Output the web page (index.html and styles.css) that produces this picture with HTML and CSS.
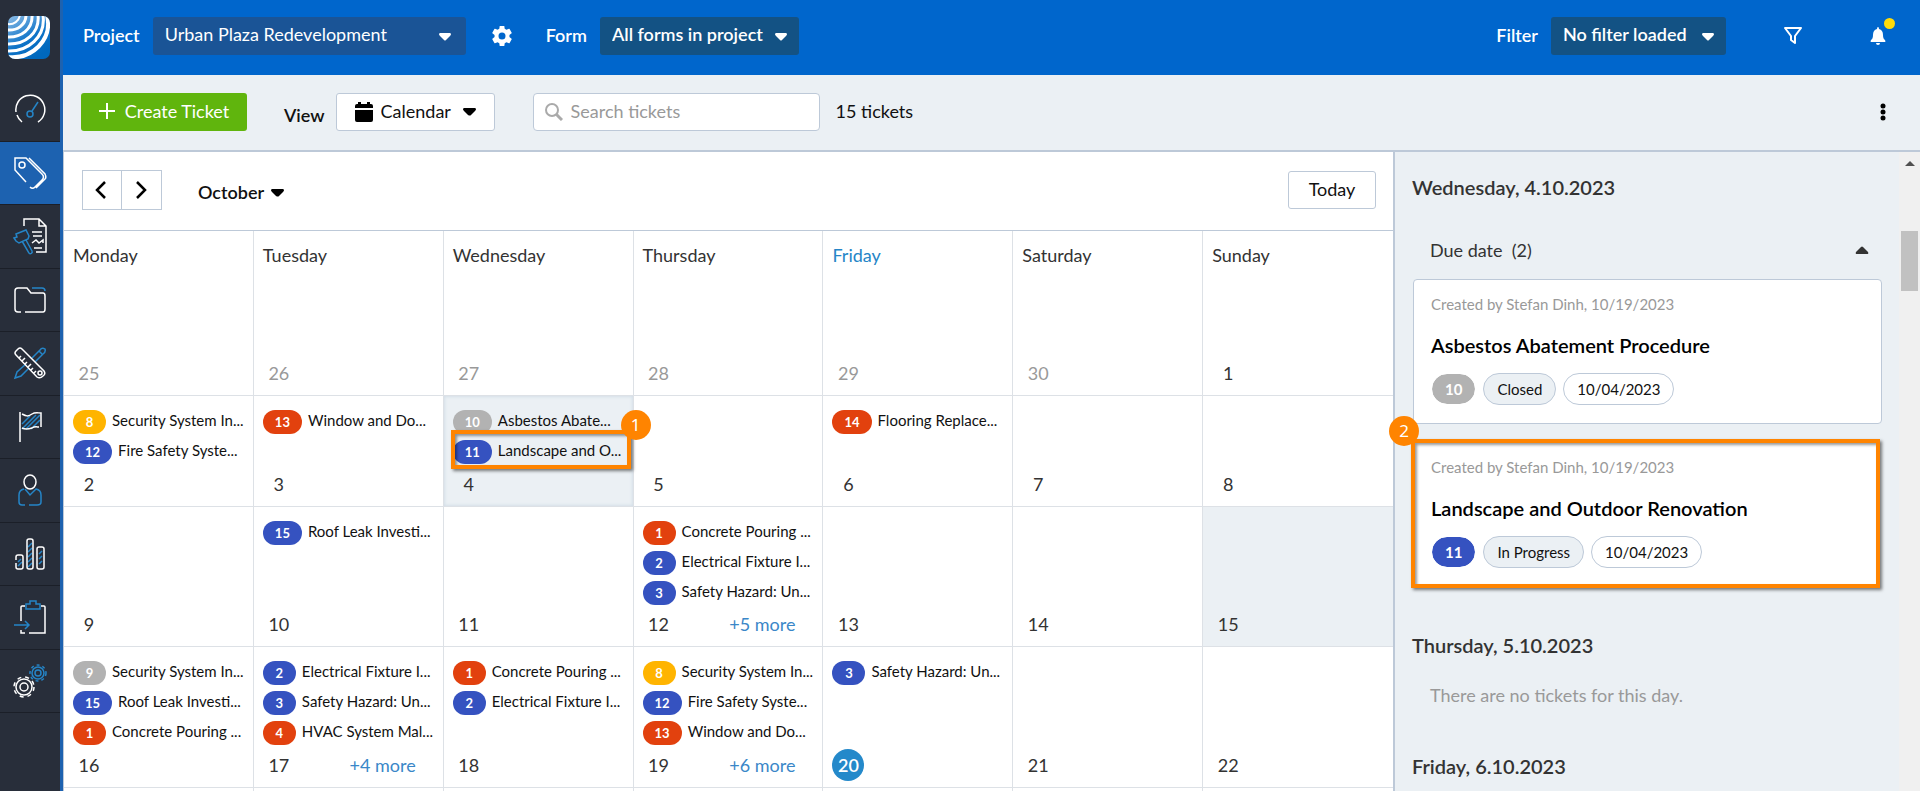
FILE: index.html
```
<!DOCTYPE html>
<html lang="en">
<head>
  <meta charset="utf-8">
  <title>Tickets - Calendar</title>
  <meta name="viewport" content="width=device-width, initial-scale=1">
  <link rel="stylesheet" href="styles.css">
</head>
<body>
  <nav class="sidebar">
    <a class="logo" href="#" aria-label="Home">
      <svg width="42" height="43" viewBox="0 0 42 43">
        <defs>
          <linearGradient id="logo-bg" x1="0" y1="0" x2="0.6" y2="1">
            <stop offset="0" stop-color="#8dbce6"/>
            <stop offset="0.6" stop-color="#0f74c8"/>
            <stop offset="1" stop-color="#0068bd"/>
          </linearGradient>
          <clipPath id="logo-clip"><rect width="42" height="43" rx="7"/></clipPath>
        </defs>
        <g clip-path="url(#logo-clip)">
          <rect width="42" height="43" fill="url(#logo-bg)"/>
          <g fill="none" stroke="#fff">
            <path stroke-width="2" d="M-1 8C6 9 11 5 12-1"/>
            <path stroke-width="3" d="M-1 14C9 15 18 9 18-1"/>
            <path stroke-width="3" d="M-1 21C13 22 25 13 24-1"/>
            <path stroke-width="3" d="M-1 28C17 29 32 17 30-1"/>
            <path stroke-width="3" d="M-1 35C20 36 38 21 35-1"/>
            <path stroke-width="4" d="M-1 41C24 44 45 24 39-1"/>
          </g>
        </g>
      </svg>
    </a>
    <div class="nav-items">
      <a href="#" aria-label="Dashboard">
        <svg width="32" height="32" viewBox="0 0 32 32">
          <path d="M8 29A14.500 14.500 0 0 1 3 22M2 19A14.500 14.500 0 1 1 24 29"/>
          <g class="accent"><circle cx="16" cy="21" r="3"/><path d="M18 18L24 9"/></g>
        </svg>
      </a>
      <a class="active" href="#" aria-label="Tickets">
        <svg width="34" height="34" viewBox="0 0 34 34">
          <path d="M13 26L2 14V2H13L29 18C31 20 31 22 29 24L22 31C20 33 18 32 17 31M16 2L32 18C33 20 33 22 32 23L23 32"/>
          <circle cx="9" cy="9" r="3"/>
        </svg>
      </a>
      <a href="#" aria-label="Reports">
        <svg width="36" height="38" viewBox="0 0 36 38">
          <path d="M12 9V2H27L34 9V35H24M27 2V9H34M20 15H30M21 19H30M22 31H30M20 26L24 23L27 26L31 23V26"/>
          <path class="accent" d="M2 21L4 24L7 26L16 22L17 19L14 13L4 17L5 20ZM10 24L17 36C18 38 21 36 20 34L14 23"/>
        </svg>
      </a>
      <a href="#" aria-label="Documents">
        <svg width="34" height="28" viewBox="0 0 34 28">
          <path d="M8 26H5Q2 26 2 23V5Q2 2 5 2H14L18 7H30Q32 7 32 10V23Q32 26 30 26H12"/>
          <path class="accent" d="M19 2H29Q32 2 32 5"/>
        </svg>
      </a>
      <a href="#" aria-label="Plans">
        <svg width="34" height="34" viewBox="0 0 34 34">
          <path class="accent" d="M19 12L27 4Q29 1 32 3Q33 6 30 8L22 16M13 18L4 26L2 32L8 30L16 22M26 5L29 8"/>
          <path d="M3 9Q1 7 3 5L5 3Q7 1 9 3L31 25Q33 28 30 30Q27 33 24 31ZM6 12L8 10M9 15L12 12M12 18L14 16M15 21L18 18M18 24L20 22M21 27L23 25"/>
          <circle cx="27" cy="27" r="2"/>
        </svg>
      </a>
      <a href="#" aria-label="Milestones">
        <svg width="28" height="32" viewBox="0 0 28 32">
          <path class="accent" d="M6 13L14 5M6 18L20 4M10 18L24 4M15 18L24 9"/>
          <path d="M4 1V31M6 3C10 5 12 6 16 3C19 1 22 2 25 2V16M6 17C10 19 13 18 16 17C19 15 21 16 23 16"/>
        </svg>
      </a>
      <a href="#" aria-label="Contacts">
        <svg width="26" height="34" viewBox="0 0 26 34">
          <ellipse cx="13" cy="9" rx="6" ry="7"/>
          <path class="accent" d="M7 16Q2 17 2 22V29Q2 32 5 32H8M12 32H20Q24 32 24 29V22Q24 17 19 16L13 22L8 16"/>
        </svg>
      </a>
      <a href="#" aria-label="Statistics">
        <svg width="32" height="34" viewBox="0 0 32 34">
          <path class="accent" d="M4 25L7 22M4 29L8 25M14 10L18 6M14 15L18 11M14 20L18 16M14 25L18 21M14 30L18 26M25 17L28 14M25 22L28 19M25 27L28 24"/>
          <path d="M2 23V20Q2 18 4 18H7Q9 18 9 20V30Q9 32 7 32H4Q2 32 2 30V26M13 4Q13 2 15 2H17Q19 2 19 4V30Q19 32 17 32H15Q13 32 13 30ZM23 12Q23 10 25 10H28Q30 10 30 12V30Q30 32 28 32H25Q23 32 23 30Z"/>
        </svg>
      </a>
      <a href="#" aria-label="Export">
        <svg width="34" height="36" viewBox="0 0 34 36">
          <path d="M12 7H9Q8 7 8 8V22M8 31V34H12M16 34H32V8Q32 7 31 7H28"/>
          <path class="accent" d="M13 10V5H17V2H23V5H27V10ZM1 26H16M12 22L16 26L12 30"/>
        </svg>
      </a>
      <a href="#" aria-label="Settings">
        <svg width="36" height="36" viewBox="0 0 36 36">
          <g>
            <circle cx="12" cy="24" r="4"/>
            <circle cx="12" cy="24" r="8"/>
            <circle cx="12" cy="24" r="10" stroke-dasharray="4 4"/>
          </g>
          <g class="accent">
            <circle cx="26" cy="10" r="3"/>
            <circle cx="26" cy="10" r="6"/>
            <circle cx="26" cy="10" r="8" stroke-dasharray="3 3"/>
          </g>
        </svg>
      </a>
    </div>
  </nav>

  <div class="page">
    <header class="topbar">
      <label for="project">Project</label>
      <select id="project" class="dark-select project-select"><option>Urban Plaza Redevelopment</option></select>
      <button class="icon-button gear" aria-label="Project settings">
        <svg width="20" height="20" viewBox="2 2 20 20" fill="#fff"><path d="M19.400 13a7.500 7.500 0 0 0 0-2l2.200-1.700a.5.5 0 0 0 .1-.6l-2.100-3.700a.5.5 0 0 0-.6-.2l-2.600 1a7.500 7.500 0 0 0-1.700-1l-.4-2.700a.5.5 0 0 0-.5-.4h-3.600a.5.5 0 0 0-.5.4l-.4 2.700a7.500 7.500 0 0 0-1.700 1l-2.600-1a.5.5 0 0 0-.6.2L2.300 8.700a.5.5 0 0 0 .1.600L4.600 11a7.500 7.500 0 0 0 0 2l-2.200 1.700a.5.5 0 0 0-.1.600l2.100 3.700c.1.200.4.300.6.200l2.600-1c.5.400 1.100.7 1.700 1l.4 2.700c0 .2.200.4.500.4h3.600c.3 0 .5-.2.500-.4l.4-2.700c.6-.3 1.200-.6 1.700-1l2.600 1c.2.100.5 0 .6-.2l2.100-3.700a.5.5 0 0 0-.1-.6zM12 15.500a3.500 3.500 0 1 1 0-7 3.500 3.500 0 0 1 0 7z"/></svg>
      </button>
      <label for="form">Form</label>
      <select id="form" class="dark-select form-select"><option>All forms in project</option></select>
      <div class="topbar-right">
        <label for="filter">Filter</label>
        <select id="filter" class="dark-select filter-select"><option>No filter loaded</option></select>
        <button class="icon-button funnel" aria-label="Filter">
          <svg width="20" height="18" viewBox="0 0 20 18" fill="none" stroke="#fff" stroke-width="2" stroke-linejoin="round"><path d="M2 1H18L12 9V16L8 13V9Z"/></svg>
        </button>
        <button class="icon-button bell" aria-label="Notifications">
          <svg width="16" height="18" viewBox="0 0 16 18" fill="#fff"><path d="M8 0Q9 0 9 2Q13 3 13 8Q13 12 15 13Q16 15 15 15H1Q0 15 1 13Q3 12 3 8Q3 3 7 2Q7 0 8 0ZM6 16H10Q10 18 8 18Q6 18 6 16Z"/></svg>
          <span class="dot"></span>
        </button>
      </div>
    </header>

    <div class="toolbar">
      <button class="create-button">
        <svg width="16" height="16" viewBox="0 0 16 16" stroke="#fff" stroke-width="2"><path d="M8 0V16M0 8H16"/></svg>
        Create Ticket
      </button>
      <label class="view-label" for="view">View</label>
      <div class="view-box">
        <svg width="18" height="20" viewBox="0 0 18 20"><path d="M3 0H6V2H12V0H15V2H16Q18 2 18 4V6H0V4Q0 2 2 2H3ZM0 8H18V18Q18 20 16 20H2Q0 20 0 18Z"/></svg>
        <select id="view" class="plain-select"><option>Calendar</option></select>
      </div>
      <div class="search-box">
        <svg width="18" height="18" viewBox="0 0 18 18" fill="none" stroke="#aaa" stroke-width="2"><circle cx="7" cy="7" r="6"/><path d="M11 11L17 17" stroke-width="3"/></svg>
        <input type="text" placeholder="Search tickets" aria-label="Search tickets">
      </div>
      <span class="count">15 tickets</span>
      <button class="icon-button more" aria-label="More">
        <svg width="6" height="18" viewBox="0 0 6 18"><circle cx="3" cy="3" r="2.500"/><circle cx="3" cy="9" r="2.500"/><circle cx="3" cy="15" r="2.500"/></svg>
      </button>
    </div>

    <div class="content">
      <main class="calendar">
        <div class="calendar-head">
          <div class="pager">
            <button aria-label="Previous month"><svg width="12" height="18" viewBox="0 0 12 18"><path d="M10 1L2 9L10 17"/></svg></button>
            <button aria-label="Next month"><svg width="12" height="18" viewBox="0 0 12 18"><path d="M2 1L10 9L2 17"/></svg></button>
          </div>
          <select class="plain-select month-select" aria-label="Month"><option>October</option></select>
          <button class="today-button">Today</button>
        </div>

        <div class="month">
          <div class="day other"><h3>Monday</h3><span class="num">25</span></div>
          <div class="day other"><h3>Tuesday</h3><span class="num">26</span></div>
          <div class="day other"><h3>Wednesday</h3><span class="num">27</span></div>
          <div class="day other"><h3>Thursday</h3><span class="num">28</span></div>
          <div class="day other"><h3 class="current">Friday</h3><span class="num">29</span></div>
          <div class="day other"><h3>Saturday</h3><span class="num">30</span></div>
          <div class="day"><h3>Sunday</h3><span class="num">1</span></div>

          <div class="day">
            <a class="event" href="#"><b class="yellow">8</b>Security System In...</a>
            <a class="event" href="#"><b class="blue">12</b>Fire Safety Syste...</a>
            <span class="num">2</span>
          </div>
          <div class="day">
            <a class="event" href="#"><b class="red">13</b>Window and Do...</a>
            <span class="num">3</span>
          </div>
          <div class="day selected">
            <a class="event" href="#"><b class="gray">10</b>Asbestos Abate...</a>
            <a class="event marked" href="#"><b class="blue">11</b>Landscape and O...</a>
            <span class="step step-one">1</span>
            <span class="num">4</span>
          </div>
          <div class="day"><span class="num">5</span></div>
          <div class="day">
            <a class="event" href="#"><b class="red">14</b>Flooring Replace...</a>
            <span class="num">6</span>
          </div>
          <div class="day"><span class="num">7</span></div>
          <div class="day"><span class="num">8</span></div>

          <div class="day"><span class="num">9</span></div>
          <div class="day">
            <a class="event" href="#"><b class="blue">15</b>Roof Leak Investi...</a>
            <span class="num">10</span>
          </div>
          <div class="day"><span class="num">11</span></div>
          <div class="day">
            <a class="event" href="#"><b class="red">1</b>Concrete Pouring ...</a>
            <a class="event" href="#"><b class="blue">2</b>Electrical Fixture I...</a>
            <a class="event" href="#"><b class="blue">3</b>Safety Hazard: Un...</a>
            <div class="day-foot"><span class="num">12</span><a href="#">+5 more</a></div>
          </div>
          <div class="day"><span class="num">13</span></div>
          <div class="day"><span class="num">14</span></div>
          <div class="day shaded"><span class="num">15</span></div>

          <div class="day">
            <a class="event" href="#"><b class="gray">9</b>Security System In...</a>
            <a class="event" href="#"><b class="blue">15</b>Roof Leak Investi...</a>
            <a class="event" href="#"><b class="red">1</b>Concrete Pouring ...</a>
            <span class="num">16</span>
          </div>
          <div class="day">
            <a class="event" href="#"><b class="blue">2</b>Electrical Fixture I...</a>
            <a class="event" href="#"><b class="blue">3</b>Safety Hazard: Un...</a>
            <a class="event" href="#"><b class="red">4</b>HVAC System Mal...</a>
            <div class="day-foot"><span class="num">17</span><a href="#">+4 more</a></div>
          </div>
          <div class="day">
            <a class="event" href="#"><b class="red">1</b>Concrete Pouring ...</a>
            <a class="event" href="#"><b class="blue">2</b>Electrical Fixture I...</a>
            <span class="num">18</span>
          </div>
          <div class="day">
            <a class="event" href="#"><b class="yellow">8</b>Security System In...</a>
            <a class="event" href="#"><b class="blue">12</b>Fire Safety Syste...</a>
            <a class="event" href="#"><b class="red">13</b>Window and Do...</a>
            <div class="day-foot"><span class="num">19</span><a href="#">+6 more</a></div>
          </div>
          <div class="day">
            <a class="event" href="#"><b class="blue">3</b>Safety Hazard: Un...</a>
            <span class="num now">20</span>
          </div>
          <div class="day"><span class="num">21</span></div>
          <div class="day"><span class="num">22</span></div>

          <div class="day"></div>
          <div class="day"></div>
          <div class="day"></div>
          <div class="day"></div>
          <div class="day"></div>
          <div class="day"></div>
          <div class="day"></div>
        </div>
      </main>

      <aside class="panel">
        <div class="agenda">
          <h2>Wednesday, 4.10.2023</h2>
          <button class="group">
            <span>Due date&nbsp; (2)</span>
            <svg width="14" height="8" viewBox="0 0 14 8" fill="#333"><path d="M6 1Q7 0 8 1L13 6Q14 8 12 8H2Q0 8 1 6Z"/></svg>
          </button>
          <article class="card">
            <p>Created by Stefan Dinh, 10/19/2023</p>
            <h4>Asbestos Abatement Procedure</h4>
            <div class="tags"><b class="gray">10</b><span class="status">Closed</span><span>10/04/2023</span></div>
          </article>
          <article class="card marked-card">
            <span class="step step-two">2</span>
            <p>Created by Stefan Dinh, 10/19/2023</p>
            <h4>Landscape and Outdoor Renovation</h4>
            <div class="tags"><b class="blue">11</b><span class="status">In Progress</span><span>10/04/2023</span></div>
          </article>
          <h2>Thursday, 5.10.2023</h2>
          <p class="empty">There are no tickets for this day.</p>
          <h2>Friday, 6.10.2023</h2>
        </div>
        <div class="scrollbar">
          <svg width="10" height="5" viewBox="0 0 10 5" fill="#505050"><path d="M5 0L10 5H0Z"/></svg>
          <div class="thumb"></div>
        </div>
      </aside>
    </div>
  </div>
</body>
</html>
```
FILE: styles.css
```
* {
  box-sizing: border-box;
}
body {
  display: flex;
  height: 100vh;
  margin: 0;
  overflow: hidden;
  font-family: Lato, sans-serif;
  font-size: 18px;
  color: #111;
  background-color: #fff;
}
h2, h3, h4, p {
  margin: 0;
}
a {
  color: #3a87c8;
  text-decoration: none;
}
button, select, input {
  font: inherit;
  color: inherit;
}
button {
  cursor: pointer;
}

/* sidebar */
.sidebar {
  flex: 0 0 63px;
  background-color: #282e3a;
  border-right: 3px solid #1d62b0;
}
.logo {
  display: block;
  height: 78px;
  padding: 16px 8px 0;
}
.logo svg {
  display: block;
}
.nav-items {
  display: grid;
  grid-template-rows: repeat(10, 1fr);
  height: 635px;
}
.nav-items a {
  display: flex;
  align-items: center;
  justify-content: center;
  border-bottom: 1px solid #1b1f28;
}
.nav-items .active {
  background-color: #1d62b0;
}
.nav-items svg {
  fill: none;
  stroke: #fff;
  stroke-width: 1.5;
}
.nav-items .accent {
  stroke: #2585c7;
}

.page {
  display: flex;
  flex-direction: column;
  flex: 1;
  min-width: 0;
}

/* blue bar on top */
.topbar {
  display: flex;
  align-items: center;
  flex: 0 0 75px;
  padding: 0 20px 4px;
  color: #fff;
  background-color: #0066cc;
}
.topbar label {
  margin-bottom: 2px;
  font-weight: 600;
}
.topbar-right {
  display: flex;
  align-items: center;
  margin-left: auto;
}
.dark-select {
  height: 38px;
  margin-left: 13px;
  padding: 0 12px 4px;
  border: none;
  border-radius: 3px;
  appearance: none;
  background: #135284 url("data:image/svg+xml,%3Csvg xmlns='http://www.w3.org/2000/svg' width='12' height='8'%3E%3Cpath d='M1 0H11Q13 1 11 3L7 7Q6 8 5 7L1 3Q-1 1 1 0Z' fill='white'/%3E%3C/svg%3E") no-repeat right 12px top 16px;
  font-weight: 600;
}
.project-select {
  width: 313px;
  background-color: #1a5496;
  background-position: right 15px top 16px;
  font-weight: normal;
}
.form-select {
  width: 199px;
}
.filter-select {
  width: 175px;
}
.icon-button {
  display: flex;
  position: relative;
  padding: 0;
  border: none;
  background: none;
}
.gear {
  margin: 0 34px 0 26px;
}
.funnel {
  margin-left: 57px;
}
.bell {
  margin: 0 14px 0 67px;
}
.dot {
  position: absolute;
  top: -9px;
  right: -9px;
  width: 11px;
  height: 11px;
  border-radius: 50%;
  background-color: #ffdb0a;
}

/* toolbar */
.toolbar {
  display: flex;
  align-items: center;
  flex: 0 0 77px;
  padding: 0 34px 2px 18px;
  border-bottom: 2px solid #bdc9d8;
  background-color: #ebf0f4;
}
.create-button {
  display: flex;
  align-items: center;
  justify-content: center;
  gap: 10px;
  width: 166px;
  height: 38px;
  padding: 0 0 2px;
  border: none;
  border-radius: 3px;
  color: #fff;
  background-color: #60b50d;
}
.view-label {
  margin: 6px 11px 0 37px;
  font-weight: 600;
}
.view-box {
  display: flex;
  align-items: center;
  width: 159px;
  height: 38px;
  padding: 0 18px;
  border: 1px solid #bdc9d8;
  border-radius: 3px;
  background-color: #fff;
}
.plain-select {
  flex: 1;
  height: 34px;
  padding: 0 0 2px 8px;
  border: none;
  appearance: none;
  background: url("data:image/svg+xml,%3Csvg xmlns='http://www.w3.org/2000/svg' width='13' height='8'%3E%3Cpath d='M1 0H12Q14 1 12 3L8 7Q7 8 5 7L1 3Q-1 1 1 0Z'/%3E%3C/svg%3E") no-repeat right center;
}
.search-box {
  display: flex;
  align-items: center;
  gap: 8px;
  width: 287px;
  height: 38px;
  margin-left: 38px;
  padding: 0 11px;
  border: 1px solid #bdc9d8;
  border-radius: 4px;
  background-color: #fff;
}
.search-box input {
  flex: 1;
  min-width: 0;
  padding: 0 0 2px;
  border: none;
  outline: none;
  background: none;
}
.search-box input::placeholder {
  color: #999;
}
.count {
  margin: 0 0 2px 16px;
}
.more {
  margin-left: auto;
}

/* calendar */
.content {
  display: flex;
  flex: 1;
  min-height: 0;
}
.calendar {
  flex: 1;
  min-width: 0;
  overflow: hidden;
  border-left: 1px solid #bdc9d8;
}
.calendar-head {
  display: flex;
  align-items: center;
  height: 79px;
  padding: 0 17px 2px 18px;
  border-bottom: 1px solid #bdc9d8;
}
.pager {
  display: flex;
}
.pager button {
  display: flex;
  align-items: center;
  justify-content: center;
  width: 40px;
  height: 40px;
  padding: 0 2px 0 0;
  border: 1px solid #bdc9d8;
  background-color: #fff;
}
.pager button + button {
  border-left: none;
}
.pager svg {
  fill: none;
  stroke: #000;
  stroke-width: 2.5;
}
.month-select {
  flex: none;
  width: 86px;
  margin: 6px 0 0 36px;
  padding-left: 0;
  font-weight: 600;
}
.today-button {
  width: 88px;
  height: 38px;
  margin-left: auto;
  padding: 0 0 2px;
  border: 1px solid #bdc9d8;
  border-radius: 3px;
  background-color: #fff;
}
.month {
  display: grid;
  grid-template-columns: repeat(7, 1fr);
  grid-template-rows: 165px minmax(111px, auto) minmax(140px, auto) minmax(141px, auto) 141px;
}
.day {
  display: flex;
  flex-direction: column;
  align-items: flex-start;
  position: relative;
  min-width: 0;
  padding: 14px 8px 6px 9px;
  border-right: 1px solid #dde1e6;
  border-bottom: 1px solid #dde1e6;
}
.day:nth-child(7n) {
  border-right: none;
}
.day h3 {
  font-size: 18px;
  font-weight: normal;
  line-height: 20px;
  color: #333;
}
.day .current {
  color: #2585c7;
}
.selected {
  background-color: #ebf0f4;
  box-shadow: inset 0 0 3px 1px #d5dfe8;
}
.shaded {
  background-color: #ebf0f4;
}
.event {
  display: flex;
  gap: 6px;
  height: 24px;
  font-size: 15px;
  line-height: 20px;
  color: #111;
  white-space: nowrap;
}
.event + .event {
  margin-top: 6px;
}
.event b {
  min-width: 33px;
  padding: 0 12px;
  border-radius: 12px;
  font-size: 13px;
  line-height: 24px;
  text-align: center;
  color: #fff;
}
.yellow {
  background-color: #ffb400;
}
.blue {
  background-color: #3552c0;
}
.red {
  background-color: #e2410e;
}
.gray {
  background-color: #b2b2b2;
}
.num {
  width: 32px;
  margin-top: auto;
  line-height: 32px;
  text-align: center;
  color: #333;
}
.other .num {
  color: #999;
}
.now {
  border-radius: 50%;
  font-weight: 600;
  color: #fff;
  background-color: #2489ca;
}
.day-foot {
  display: flex;
  align-items: center;
  justify-content: space-between;
  align-self: stretch;
  margin-top: auto;
  padding-right: 19px;
}

/* orange step markers */
.marked::after {
  content: "";
  position: absolute;
  top: 34px;
  left: 7px;
  right: 2px;
  height: 31px;
  border: 4px solid #ff8400;
  box-shadow: 2px 2px 3px rgba(0, 0, 0, 0.5), inset 2px 2px 3px rgba(0, 0, 0, 0.4);
}
.step {
  position: absolute;
  z-index: 1;
  width: 30px;
  border-radius: 50%;
  font-family: "Noto Sans", sans-serif;
  font-size: 17px;
  line-height: 30px;
  text-align: center;
  color: #fff;
  background-color: #ff8400;
}
.step-one {
  top: 14px;
  right: -18px;
}
.step-two {
  top: -27px;
  left: -26px;
}

/* day list on the right */
.panel {
  display: flex;
  flex: 0 0 527px;
  border-left: 2px solid #bdc9d8;
  background-color: #ebf0f4;
}
.agenda {
  flex: 1;
  padding: 23px 17px 0;
}
.agenda h2 {
  font-size: 20px;
  font-weight: 600;
  line-height: 24px;
  color: #333;
}
.group {
  display: flex;
  align-items: center;
  justify-content: space-between;
  width: 100%;
  margin: 39px 0 17px;
  padding: 0 13px 0 18px;
  border: none;
  line-height: 24px;
  color: #333;
  background: none;
}
.card {
  position: relative;
  height: 145px;
  margin-left: 1px;
  padding: 15px 17px;
  border: 1px solid #bdc9d8;
  border-radius: 4px;
  background-color: #fff;
}
.card p {
  font-size: 15px;
  line-height: 18px;
  color: #999;
}
.card h4 {
  margin: 20px 0 16px;
  font-size: 20px;
  font-weight: 600;
  line-height: 24px;
  color: #000;
}
.tags {
  display: flex;
  gap: 7px;
  font-size: 15px;
  line-height: 30px;
}
.tags b, .tags span {
  padding: 0 13px;
  border: 1px solid #bdc9d8;
  border-radius: 16px;
}
.tags b {
  border-color: #fff;
  background-clip: padding-box;
  color: #fff;
}
.tags .status {
  background-color: #ebf0f4;
}
.marked-card {
  margin: 15px 2px 45px -1px;
  height: 149px;
  padding: 15px 16px 0;
  border: 4px solid #ff8400;
  border-radius: 0;
  box-shadow: 2px 2px 3px rgba(0, 0, 0, 0.5), inset 2px 2px 3px rgba(0, 0, 0, 0.4);
}
.empty {
  margin: 26px 0 47px 18px;
  line-height: 24px;
  color: #999;
}
.scrollbar {
  display: flex;
  flex-direction: column;
  align-items: center;
  flex: 0 0 21px;
  padding-top: 9px;
  background-color: #f0f0f0;
}
.thumb {
  width: 17px;
  height: 60px;
  margin-top: 65px;
  background-color: #c1c1c1;
}
```
